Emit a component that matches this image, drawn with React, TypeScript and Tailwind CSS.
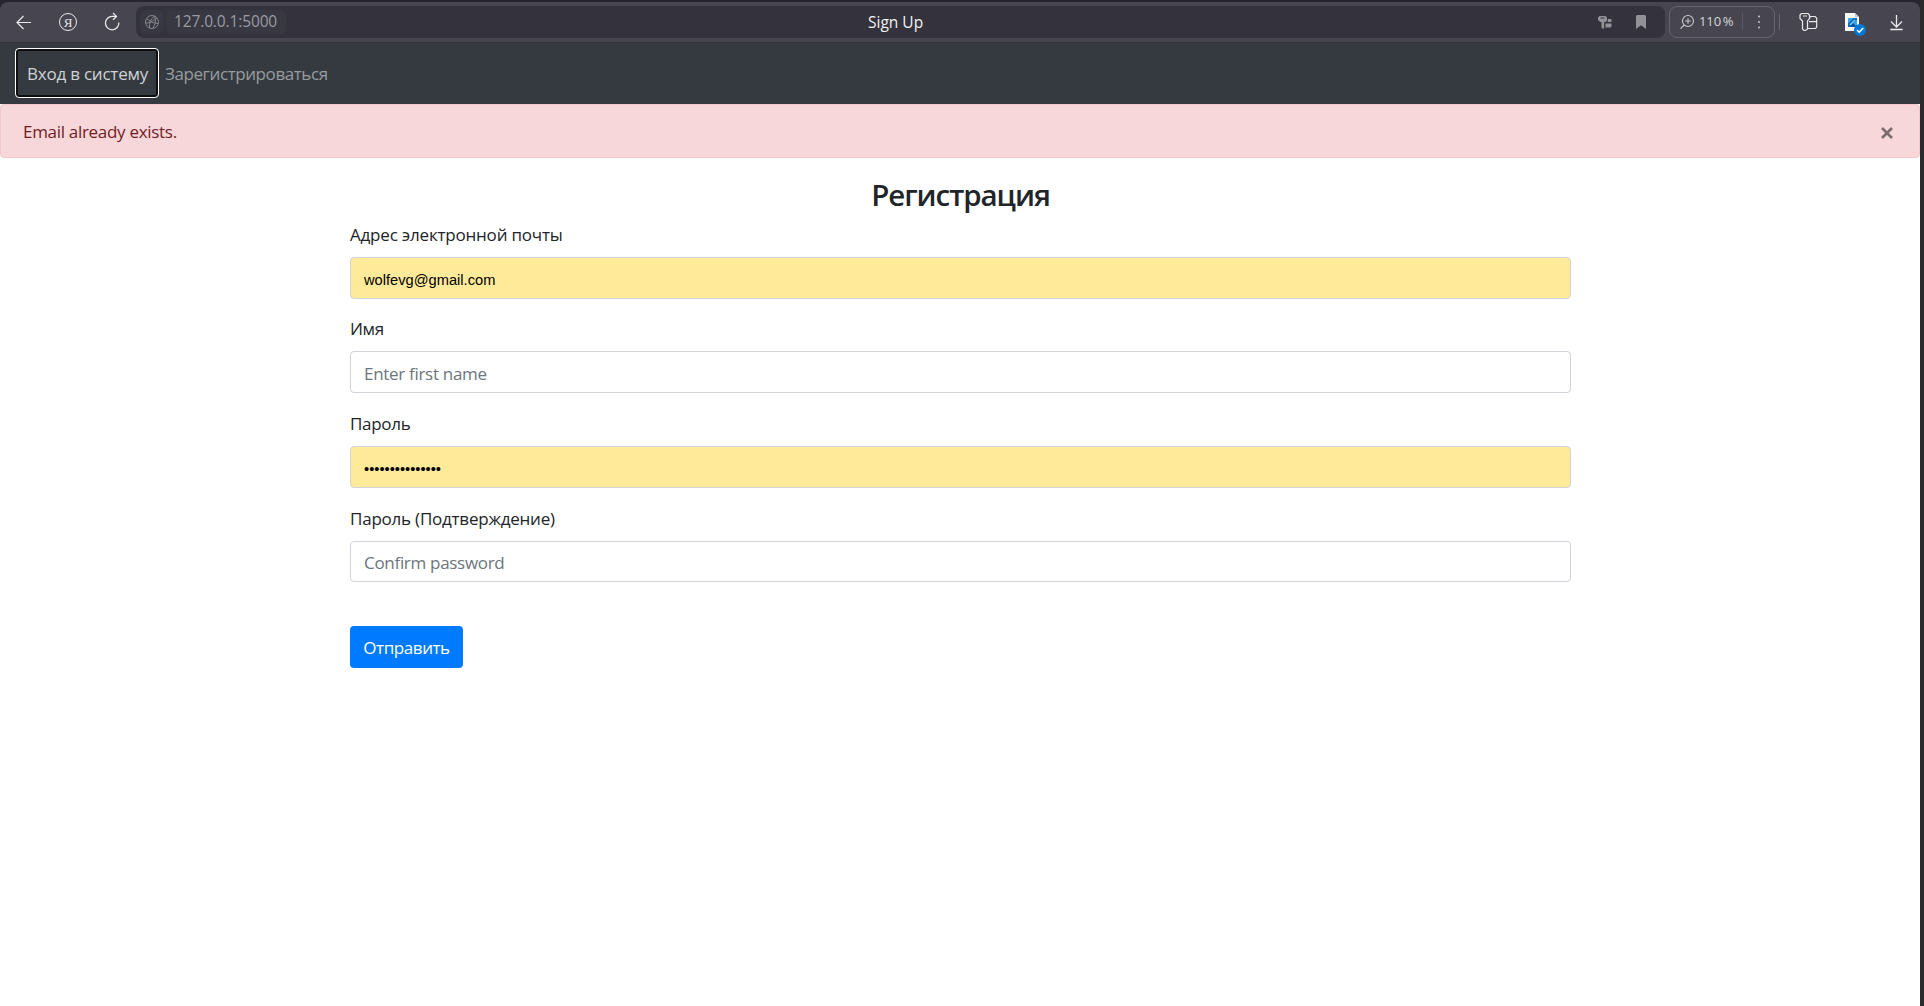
import type { ReactNode } from "react";

function Toolbar() {
  return (
    <header className="flex h-10 items-start rounded-t-lg bg-[#474650] pt-1 text-[#e9e9eb]">
      <div className="flex h-8 w-[136px] shrink-0 items-center pl-3">
        <svg className="size-6 shrink-0" viewBox="0 0 24 24" fill="none" stroke="currentColor" strokeWidth="1.2">
          <path d="M19 12.5H5.500M11.500 6l-6.500 6.500 6.500 6.500" />
        </svg>
        <span className="ml-[23px] flex size-[18px] shrink-0 items-center justify-center rounded-full border border-current font-['Liberation_Serif',serif] text-[13px] leading-none">
          Я
        </span>
        <svg className="ml-[23px] size-6 shrink-0" viewBox="0 0 24 24" fill="none" stroke="currentColor" strokeWidth="1.3">
          <path d="M16.200 6.400H12.500a6.700 6.700 0 1 0 6.300 6.100M13 3l3.500 3.400L13 9.800" />
        </svg>
      </div>
      <div className="flex h-8 w-[1529px] shrink-0 items-center rounded-lg bg-[#34333d] px-1">
        <span className="flex size-6 shrink-0 items-center justify-center rounded-md bg-[#373842]">
          <svg className="size-4" viewBox="0 0 16 16" fill="none" stroke="#85858c" strokeWidth="1">
            <circle cx="8" cy="8" r="6.500" />
            <path d="M10.500 2Q4.500 7 5.500 14M10.500 2Q13 8 8.800 14.400M2.500 4.500Q8 10 14.300 9.500M1.600 9.500Q7 9 13 4" />
          </svg>
        </span>
        <span className="ml-0.5 flex h-6 w-[120px] items-center rounded-md bg-[#373842] pl-2 font-['Open_Sans',sans-serif] text-[15.500px] tracking-[-0.13px] text-[#9b9ba1]">
          127.0.0.1:5000
        </span>
        <span className="ml-[582px] mt-px w-[60px] whitespace-nowrap font-['Open_Sans',sans-serif] text-[15.500px] tracking-[0px] text-[#f1f1f2]">
          Sign Up
        </span>
        <svg className="ml-[670px] h-4 w-[14px] shrink-0" viewBox="0 0 14 16" fill="#929198">
          <path fillRule="evenodd" d="M1.500 2h6l1.500 1.500v3L7.500 8H6.200v6L5 15 3.500 13.500V8H2.300L0 6V3.500zM2.500 3.500v1h4v-1z" />
          <path d="M10 5h3l.5.500V8H9.500zM7.500 9.500h6v3l-1 1h-5z" />
        </svg>
        <svg className="ml-6 h-[14px] w-[10px] shrink-0" viewBox="0 0 10 14" fill="#929198">
          <path d="M1 0h8l1 1v13L5 10.200 0 14V1z" />
        </svg>
      </div>
      <div className="ml-1 flex h-8 w-[106px] shrink-0 items-center rounded-lg border border-[#66656e]">
        <svg className="ml-[10px] size-4 shrink-0" viewBox="0 0 16 16" fill="none" stroke="#c8c8cc" strokeWidth="1.1">
          <circle cx="8" cy="7" r="5.500" />
          <path d="M4.200 11l-3.700 3.700M8 4.300v5.400M5.300 7h5.400" />
        </svg>
        <span className="ml-[3px] w-[35px] whitespace-nowrap font-['Open_Sans',sans-serif] text-[13px] tracking-[-0.1px] text-[#d5d5d8] [word-spacing:-1.5px]">
          110 %
        </span>
        <span className="ml-2 h-[18px] w-px bg-[#5b5a63]" />
        <svg className="ml-[14px] h-4 w-1" viewBox="0 0 4 16" fill="#bdbdc1">
          <circle cx="2" cy="2.500" r="1.050" />
          <circle cx="2" cy="8" r="1.050" />
          <circle cx="2" cy="13.500" r="1.050" />
        </svg>
      </div>
      <span className="ml-1 mt-2 h-4 w-px bg-[#6a6972]" />
      <svg className="ml-[19px] mt-1.5 h-5 w-[19px] shrink-0" viewBox="0 0 19 20" fill="none" stroke="currentColor" strokeWidth="1.2">
        <path d="M2.500 1.500h6.500l1.500 1.500v3.500L8.500 9v8L6.500 18.500H5L3.500 17V9L1 6.500V3zM4 4h4" />
        <path d="M10.500 5.500l1.200-1h4.300l1.700 1.500v9l-1.200 1.500H8.500M10 9.700h7.700" />
      </svg>
      <svg className="ml-[26px] mt-1.5 h-[25px] w-6 shrink-0" viewBox="0 0 24 25" fill="none">
        <path d="M1 1h10l4 4v14H1z" fill="#f7f7f8" />
        <path d="M11 1v4h4z" fill="#c2c4ca" />
        <rect x="4" y="6" width="9" height="9" rx="1" fill="#35a5ed" />
        <path d="M4 15l4.500-4.500L13 15z" fill="#0a4f9e" />
        <path d="M4 11.500L9.500 6H13v1.500L6 14.500H4z" fill="#1668b8" />
        <path d="M6 13l5-5" stroke="#6fd3f7" strokeWidth="1.500" />
        <circle cx="16" cy="18" r="6" fill="#0078d7" />
        <path d="M13 18l2.200 2.200 4-4.200" stroke="white" strokeWidth="1.600" />
      </svg>
      <svg className="ml-4 mt-1.5 size-6 shrink-0" viewBox="0 0 24 24" fill="none" stroke="currentColor" strokeWidth="1.300">
        <path d="M12.500 3v12M7 9.500l5.500 5.500 5.500-5.500M6.300 17.500h12.400" />
      </svg>
    </header>
  );
}

function Field({ label, className, children }: { label: string; className: string; children: ReactNode }) {
  return (
    <label className={`block ${className}`}>
      <span className="block h-[35px] whitespace-nowrap leading-[26px]">{label}</span>
      {children}
    </label>
  );
}

const control =
  "block w-full rounded-[4px] border border-[#ced4da] px-[13px] outline-none placeholder:text-[#6c757d] placeholder:opacity-100";

export default function App() {
  return (
    <div className="flex h-[1006px] w-[1924px] overflow-hidden bg-[#2b2b2d] font-['Open_Sans',sans-serif] text-[17px] text-[#212529]">
      <div className="flex w-[1920px] flex-col bg-white">
        <div className="bg-[#26252f] pt-0.5">
          <Toolbar />
        </div>
        <nav className="flex h-[62px] shrink-0 items-start bg-[#343a40] pl-[15px] pt-1.5 shadow-[inset_0_1px_0_#34333d]">
          <a className="flex h-[50px] w-[144px] items-center whitespace-nowrap rounded-[4px] border border-white pl-[11px] pt-0.5 tracking-[-0.22px] text-[#d0d2d3] shadow-[inset_0_0_0_2px_#101010]">
            Вход в систему
          </a>
          <a className="flex h-[50px] items-center whitespace-nowrap pl-1.5 pt-0.5 tracking-[-0.42px] text-[#999c9f]">
            Зарегистрироваться
          </a>
        </nav>
        <div className="flex h-[54px] shrink-0 items-center justify-between rounded-[4px] border border-[#f5c6cb] bg-[#f8d7da] pl-[22px] pr-[26px] text-[#721c24]">
          <span className="pt-px tracking-[-0.3px]">Email already exists.</span>
          <svg className="mt-[3px] size-3" viewBox="0 0 12 12" stroke="#7b6b6d" strokeWidth="2.600">
            <path d="M1 1l10 10M11 1L1 11" />
          </svg>
        </div>
        <form className="ml-[350px] flex w-[1221px] flex-col">
          <h3 className="mt-[18px] h-[46px] text-center text-[29.500px] font-semibold leading-[37px] tracking-[-1.05px]">
            Регистрация
          </h3>
          <Field label="Адрес электронной почты" className="h-[94px] tracking-[-0.2px]">
            <input
              className={`${control} h-[42px] bg-[#ffea9a] pt-[3px] font-['Liberation_Sans',sans-serif] text-[14.667px] tracking-normal text-black`}
              defaultValue="wolfevg@gmail.com"
            />
          </Field>
          <Field label="Имя" className="h-[95px] tracking-[-0.3px]">
            <input className={`${control} h-[42px] pt-[3px]`} placeholder="Enter first name" />
          </Field>
          <Field label="Пароль" className="h-[95px] tracking-[-0.3px]">
            <input
              type="password"
              className={`${control} h-[42px] bg-[#ffea9a] pt-[3px] font-['Liberation_Sans',sans-serif] text-[14.667px] tracking-normal text-black`}
              defaultValue="123456789012345"
            />
          </Field>
          <Field label="Пароль (Подтверждение)" className="h-[95px] tracking-[-0.22px]">
            <input className={`${control} h-[41px] pt-px tracking-[-0.3px]`} placeholder="Confirm password" />
          </Field>
          <button
            type="button"
            className="mt-[25px] h-[42px] w-[113px] whitespace-nowrap rounded-[4px] bg-[#007bff] pt-0.5 tracking-[-0.42px] text-white"
          >
            Отправить
          </button>
        </form>
      </div>
    </div>
  );
}
